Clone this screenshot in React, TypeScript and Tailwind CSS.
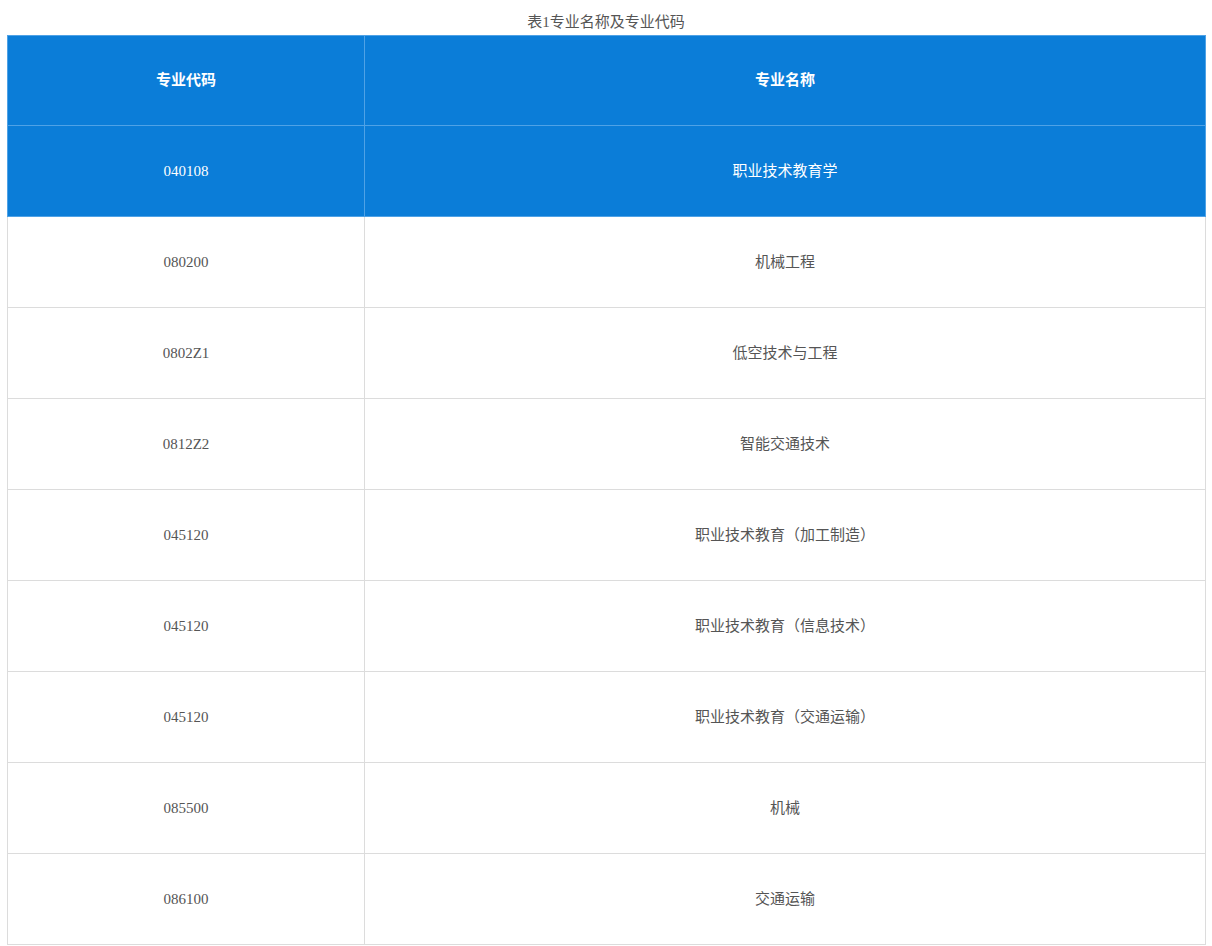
const rows: [string, string][] = [
  ['080200', '机械工程'],
  ['0802Z1', '低空技术与工程'],
  ['0812Z2', '智能交通技术'],
  ['045120', '职业技术教育（加工制造）'],
  ['045120', '职业技术教育（信息技术）'],
  ['045120', '职业技术教育（交通运输）'],
  ['085500', '机械'],
  ['086100', '交通运输'],
]

const font = { fontFamily: '"Liberation Serif", "Noto Sans CJK SC", serif' }

export default function App() {
  return (
    <div className="bg-white px-[7px] pt-[12px] text-[15px]" style={font}>
      <div className="text-center text-[#555] leading-[20px] mb-[3px]">表1专业名称及专业代码</div>
      <table className="w-[1199px] border-collapse table-fixed">
        <colgroup>
          <col className="w-[357px]" />
          <col />
        </colgroup>
        <tbody>
          <tr className="bg-[#0b7dd8] text-white font-bold h-[90px]">
            <td className="border border-[#4fa2e6] text-center">专业代码</td>
            <td className="border border-[#4fa2e6] text-center">专业名称</td>
          </tr>
          <tr className="bg-[#0b7dd8] text-white h-[91px]">
            <td className="border border-[#4fa2e6] text-center">040108</td>
            <td className="border border-[#4fa2e6] text-center">职业技术教育学</td>
          </tr>
          {rows.map(([c, n], i) => (
            <tr key={i} className="h-[91px] text-[#555]">
              <td className="border border-[#dcdcdc] text-center">{c}</td>
              <td className="border border-[#dcdcdc] text-center">{n}</td>
            </tr>
          ))}
        </tbody>
      </table>
    </div>
  )
}
